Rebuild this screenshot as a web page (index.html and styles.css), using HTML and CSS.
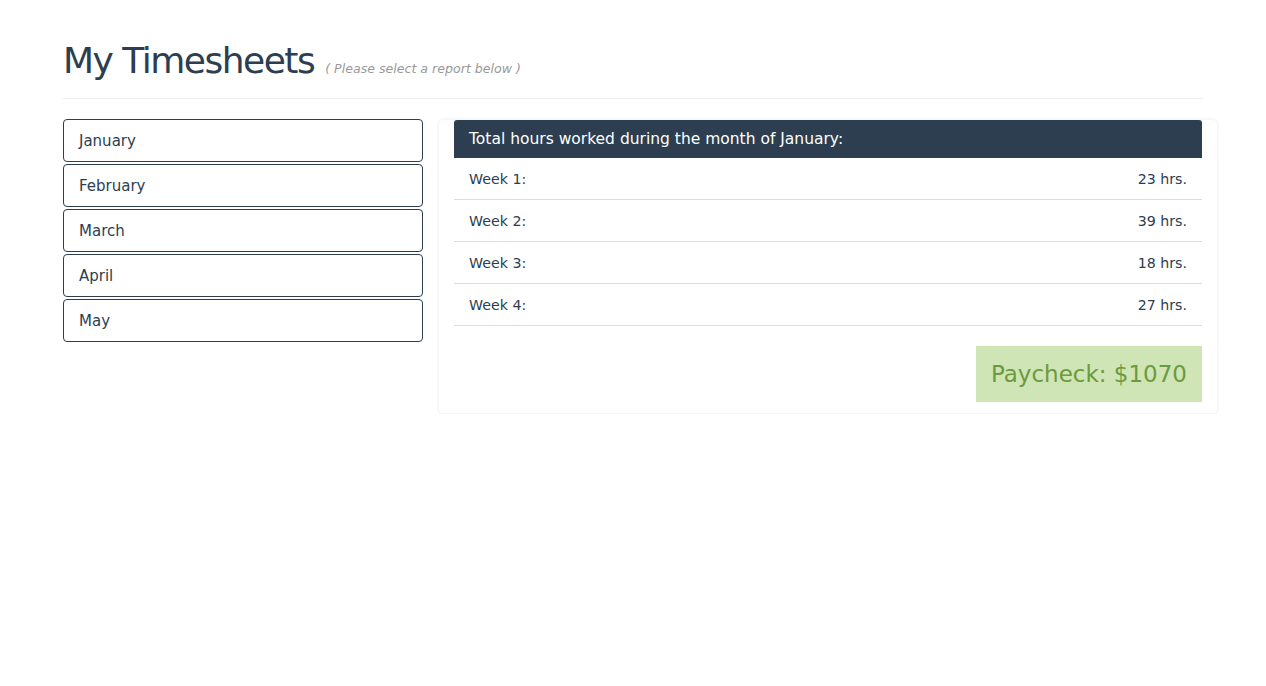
FILE: index.html
```html
<!DOCTYPE html>
<html>
<head>
<meta charset="utf-8">
<title>My Timesheets</title>
<link rel="stylesheet" href="styles.css">
</head>
<body>
<div class="container">
  <div class="page-header">
    <h1 class="title">My Timesheets</h1>
    <small class="subtitle">( Please select a report below )</small>
  </div>
  <div class="row">
    <div class="months">
      <button class="month">January</button>
      <button class="month">February</button>
      <button class="month">March</button>
      <button class="month">April</button>
      <button class="month">May</button>
    </div>
    <div class="report">
      <div class="report-head">Total hours worked during the month of January:</div>
      <div class="week"><span>Week 1:</span><span>23 hrs.</span></div>
      <div class="week"><span>Week 2:</span><span>39 hrs.</span></div>
      <div class="week"><span>Week 3:</span><span>18 hrs.</span></div>
      <div class="week"><span>Week 4:</span><span>27 hrs.</span></div>
      <div class="pay-row"><div class="paycheck">Paycheck: $1070</div></div>
    </div>
  </div>
</div>
</body>
</html>
```
FILE: styles.css
```css
* { box-sizing: border-box; }
html, body { margin: 0; padding: 0; background: #fff; }
body {
  font-family: "DejaVu Sans", "Liberation Sans", sans-serif;
  color: #2c3e50;
}
.container {
  width: 1140px;
  margin: 0 0 0 63px;
}
.page-header {
  display: flex;
  align-items: baseline;
  padding-top: 38px;
  padding-bottom: 14px;
  border-bottom: 1px solid #eee;
  margin-bottom: 20px;
}
.title {
  margin: 0;
  font-weight: 400;
  font-size: 36px;
  line-height: 46px;
  color: #2c3e50;
  letter-spacing: -1.5px;
}
.subtitle {
  margin-left: 11px;
  font-size: 12.6px;
  font-style: italic;
  color: #999;
}
.row {
  display: flex;
  align-items: flex-start;
  width: 1155px;
}
.months {
  width: 360px;
  flex-shrink: 0;
  display: flex;
  flex-direction: column;
  gap: 2px;
}
.month {
  display: block;
  width: 100%;
  height: 43px;
  text-align: left;
  padding: 0 15px;
  background: #fff;
  border: 1px solid #2c3e50;
  border-radius: 4px;
  font-family: inherit;
  font-size: 15px;
  color: #2c3e50;
}
.report {
  width: 780px;
  flex-shrink: 0;
  margin-left: 15px;
  padding: 0 15px 11px 15px;
  border-radius: 5px;
  box-shadow: 0 0 3px rgba(0,0,0,0.06);
  border: 1px solid #f6f6f6;
}
.report-head {
  height: 38px;
  display: flex;
  align-items: center;
  padding: 0 15px;
  background: #2c3e50;
  color: #fff;
  font-size: 15.5px;
  border-radius: 3px 3px 0 0;
}
.week {
  height: 42px;
  display: flex;
  align-items: center;
  justify-content: space-between;
  padding: 0 15px;
  border-bottom: 1px solid #ddd;
  font-size: 14.2px;
  color: #2c3e50;
}
.pay-row {
  display: flex;
  justify-content: flex-end;
  margin-top: 20px;
}
.paycheck {
  height: 56px;
  display: flex;
  align-items: center;
  padding: 0 15px;
  background: #cfe5b5;
  color: #6b9a3f;
  font-size: 23px;
}
```
